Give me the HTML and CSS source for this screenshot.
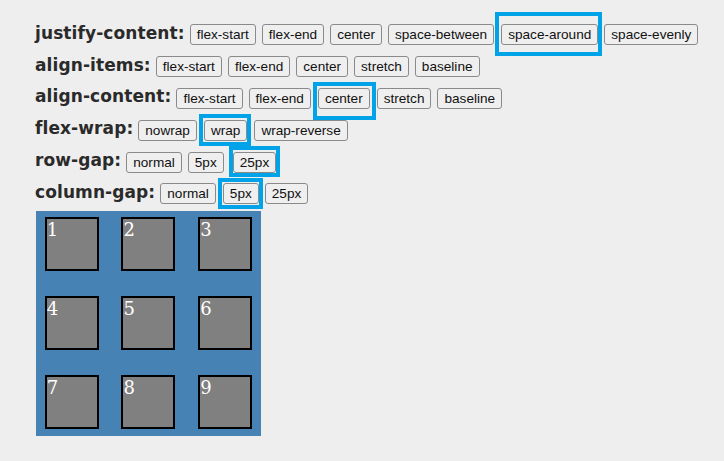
FILE: index.html
```html
<!DOCTYPE html>
<html>
<head>
<meta charset="utf-8">
<link rel="stylesheet" href="styles.css">
</head>
<body>
<div class="controls">
  <div class="row">
    <span class="label">justify-content:</span>
    <button class="btn">flex-start</button>
    <button class="btn">flex-end</button>
    <button class="btn">center</button>
    <button class="btn">space-between</button>
    <button class="btn sel sel-around">space-around</button>
    <button class="btn">space-evenly</button>
  </div>
  <div class="row">
    <span class="label">align-items:</span>
    <button class="btn">flex-start</button>
    <button class="btn">flex-end</button>
    <button class="btn">center</button>
    <button class="btn">stretch</button>
    <button class="btn">baseline</button>
  </div>
  <div class="row">
    <span class="label">align-content:</span>
    <button class="btn">flex-start</button>
    <button class="btn">flex-end</button>
    <button class="btn sel sel-center">center</button>
    <button class="btn">stretch</button>
    <button class="btn">baseline</button>
  </div>
  <div class="row">
    <span class="label">flex-wrap:</span>
    <button class="btn">nowrap</button>
    <button class="btn sel sel-wrap">wrap</button>
    <button class="btn">wrap-reverse</button>
  </div>
  <div class="row">
    <span class="label">row-gap:</span>
    <button class="btn">normal</button>
    <button class="btn">5px</button>
    <button class="btn sel sel-row">25px</button>
  </div>
  <div class="row">
    <span class="label">column-gap:</span>
    <button class="btn">normal</button>
    <button class="btn sel sel-col">5px</button>
    <button class="btn">25px</button>
  </div>
</div>
<div class="flex-box">
  <div class="item">1</div>
  <div class="item">2</div>
  <div class="item">3</div>
  <div class="item">4</div>
  <div class="item">5</div>
  <div class="item">6</div>
  <div class="item">7</div>
  <div class="item">8</div>
  <div class="item">9</div>
</div>
</body>
</html>
```
FILE: styles.css
```css
html, body {
  margin: 0;
  background: #eeeeee;
}
body {
  padding: 19px 0 0 36px;
}
.controls {
  display: flex;
  flex-direction: column;
}
.row {
  display: flex;
  align-items: center;
  height: 31.8px;
  gap: 6px;
}
.label {
  font-family: "DejaVu Sans", sans-serif;
  font-weight: 700;
  font-size: 17px;
  line-height: 20px;
  letter-spacing: 0.1px;
  color: #2a2a2a;
  margin-left: -1px;
  margin-right: -1px;
  margin-bottom: 4px;
}
.btn {
  font-family: "Liberation Sans", Arial, sans-serif;
  font-size: 13.6px;
  color: #111;
  background: #efefef;
  border: 1px solid #8a8a8a;
  border-radius: 3px;
  padding: 2px 6px;
  line-height: 15px;
  margin: 0;
}
.sel {
  position: relative;
}
.sel::after {
  content: "";
  position: absolute;
  border: 4px solid #00a3e8;
  pointer-events: none;
}
.sel-around { margin-left: 1px; }
.sel-around::after { top: -13px; right: -5px; bottom: -12px; left: -7px; }
.sel-center { margin-left: 1px; margin-right: 1px; }
.sel-center::after { top: -7px; right: -7px; bottom: -12px; left: -6px; }
.sel-wrap { margin-left: 1px; margin-right: 1px; }
.sel-wrap::after { top: -7px; right: -5px; bottom: -6px; left: -6px; }
.sel-row { margin-left: 3px; }
.sel-row::after { top: -7px; right: -5px; bottom: -5px; left: -5px; }
.sel-col { margin-left: 1px; }
.sel-col::after { top: -6px; right: -5px; bottom: -6px; left: -6px; }

.flex-box {
  margin-top: 1px;
  width: 225px;
  height: 225px;
  background: #4682b4;
  display: flex;
  flex-wrap: wrap;
  justify-content: space-around;
  align-content: center;
  row-gap: 25px;
  column-gap: 5px;
}
.item {
  width: 50px;
  height: 50px;
  background: #808080;
  border: 2px solid #000;
  color: #fff;
  font-family: "DejaVu Serif", serif;
  font-size: 18px;
  line-height: 22px;
}
```
